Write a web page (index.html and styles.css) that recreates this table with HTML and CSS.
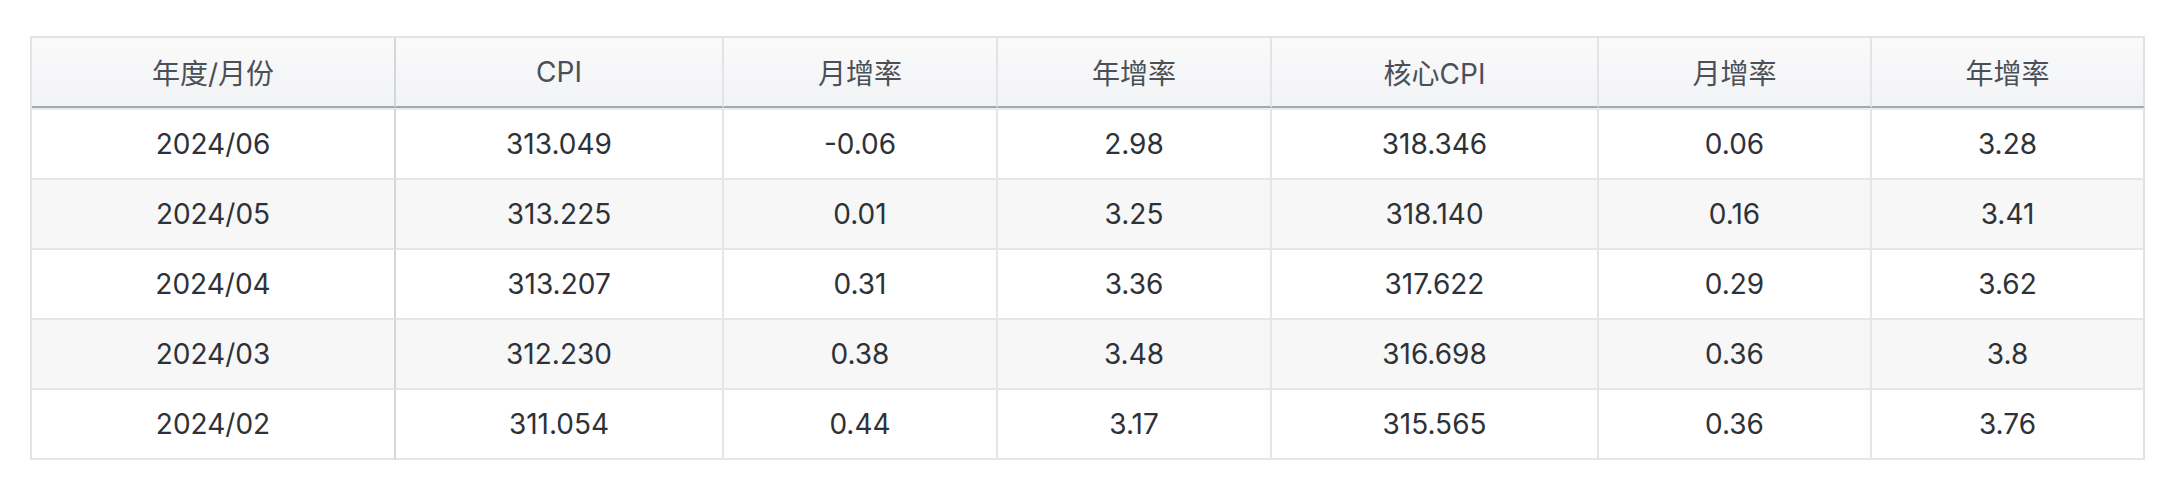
FILE: index.html
```html
<!DOCTYPE html>
<html lang="zh-CN">
<head>
<meta charset="utf-8">
<title>CPI</title>
<link rel="stylesheet" href="styles.css">
</head>
<body>
<div class="wrap">
<table class="cpi">
  <colgroup>
    <col class="c1"><col class="c2"><col class="c3"><col class="c4"><col class="c5"><col class="c6"><col class="c7">
  </colgroup>
  <thead>
    <tr>
      <th class="first">年度/月份</th>
      <th>CPI</th>
      <th>月增率</th>
      <th>年增率</th>
      <th>核心CPI</th>
      <th>月增率</th>
      <th>年增率</th>
    </tr>
  </thead>
  <tbody>
    <tr>
      <td class="first">2024/06</td><td>313.049</td><td>-0.06</td><td>2.98</td><td>318.346</td><td>0.06</td><td>3.28</td>
    </tr>
    <tr>
      <td class="first">2024/05</td><td>313.225</td><td>0.01</td><td>3.25</td><td>318.140</td><td>0.16</td><td>3.41</td>
    </tr>
    <tr>
      <td class="first">2024/04</td><td>313.207</td><td>0.31</td><td>3.36</td><td>317.622</td><td>0.29</td><td>3.62</td>
    </tr>
    <tr>
      <td class="first">2024/03</td><td>312.230</td><td>0.38</td><td>3.48</td><td>316.698</td><td>0.36</td><td>3.8</td>
    </tr>
    <tr>
      <td class="first">2024/02</td><td>311.054</td><td>0.44</td><td>3.17</td><td>315.565</td><td>0.36</td><td>3.76</td>
    </tr>
  </tbody>
</table>
</div>
</body>
</html>
```

FILE: styles.css
```css
* { box-sizing: border-box; }
html, body { margin: 0; padding: 0; background: #ffffff; }
body {
  font-family: Inter, "Noto Sans CJK SC", "Noto Sans", sans-serif;
  font-size: 28px;
  color: #2e3238;
}
.wrap {
  padding: 36px 0 0 30px;
}
.cpi {
  border-collapse: separate;
  border-spacing: 0;
  table-layout: fixed;
  width: 2115px;
  border-left: 2px solid #e1e3e6;
  border-top: 2px solid #e1e3e6;
}
.c1 { width: 364px; }
.c2 { width: 328px; }
.c3 { width: 274px; }
.c4 { width: 274px; }
.c5 { width: 327px; }
.c6 { width: 273px; }
.c7 { width: 273px; }
.cpi th, .cpi td {
  text-align: center;
  vertical-align: middle;
  padding: 0;
  font-weight: 400;
  border-right: 2px solid #e6e6e8;
  border-bottom: 2px solid #e6e6e6;
}
.cpi th {
  height: 70px;
  color: #4b5058;
  background: linear-gradient(to bottom, #fafafa, #f2f3f6);
  border-bottom: 2px solid #a4a9b0;
  border-right-color: #e2e4e7;
}
.cpi td {
  height: 70px;
}
.cpi tbody tr:first-child td {
  height: 72px;
  border-top: 2px solid #ebebeb;
}
.cpi tbody tr:nth-child(even) td { background: #f7f7f7; }
.cpi .first { border-right-color: #d3d6da; }
.cpi th:last-child, .cpi td:last-child { border-right-color: #dfe2e5; }
```
